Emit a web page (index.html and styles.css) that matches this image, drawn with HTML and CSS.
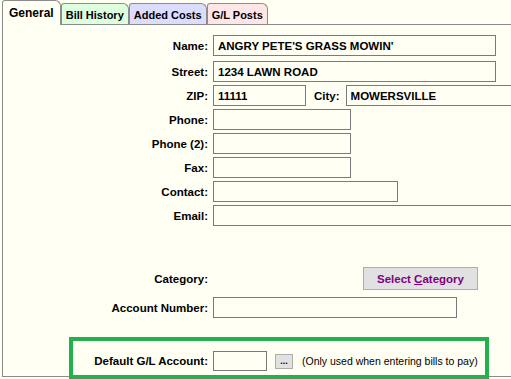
FILE: index.html
```html
<!DOCTYPE html>
<html lang="en">
<head>
    <meta charset="UTF-8">
    <title>Vendor</title>
    <link rel="stylesheet" href="styles.css">
</head>
<body>
<div class="tabs">
    <div class="tab tab-active">General</div>
    <div class="tab tab-bills">Bill History</div>
    <div class="tab tab-costs">Added Costs</div>
    <div class="tab tab-posts">G/L Posts</div>
</div>
<div class="panel">
    <div class="row row-name">
        <label class="lbl">Name:</label>
        <input class="field w-name" type="text" value="ANGRY PETE'S GRASS MOWIN'" readonly>
    </div>
    <div class="row">
        <label class="lbl">Street:</label>
        <input class="field w-name" type="text" value="1234 LAWN ROAD" readonly>
    </div>
    <div class="row">
        <label class="lbl">ZIP:</label>
        <input class="field w-zip" type="text" value="11111" readonly>
        <label class="lbl-city">City:</label>
        <input class="field field-open" type="text" value="MOWERSVILLE" readonly>
    </div>
    <div class="row">
        <label class="lbl">Phone:</label>
        <input class="field w-phone" type="text" readonly>
    </div>
    <div class="row">
        <label class="lbl">Phone (2):</label>
        <input class="field w-phone" type="text" readonly>
    </div>
    <div class="row">
        <label class="lbl">Fax:</label>
        <input class="field w-phone" type="text" readonly>
    </div>
    <div class="row">
        <label class="lbl">Contact:</label>
        <input class="field w-contact" type="text" readonly>
    </div>
    <div class="row">
        <label class="lbl">Email:</label>
        <input class="field field-open" type="text" readonly>
    </div>

    <div class="row row-category">
        <label class="lbl">Category:</label>
        <button class="btn-category">Select <u>C</u>ategory</button>
    </div>
    <div class="row">
        <label class="lbl">Account Number:</label>
        <input class="field w-account" type="text" readonly>
    </div>

    <!-- highlighted box -->
    <div class="gl-box">
        <label class="lbl lbl-gl">Default G/L Account:</label>
        <input class="field w-gl" type="text" readonly>
        <button class="btn-dots">...</button>
        <span class="note">(Only used when entering bills to pay)</span>
    </div>
</div>
</body>
</html>
```

FILE: styles.css
```css
body {
    margin: 0;
    width: 511px;
    height: 379px;
    overflow: hidden;
    background-color: #fffff4;
    font-family: "Liberation Sans", Arial, sans-serif;
    font-size: 11.5px;
    font-weight: bold;
    color: #000;
}

/* tab strip */
.tabs {
    display: flex;
    align-items: flex-end;
    height: 24px;
    padding-left: 2px;
}

.tab {
    box-sizing: border-box;
    height: 21px;
    padding: 1px 4px 0;
    border: 1px solid #8c8c8c;
    border-bottom: none;
    border-radius: 3px 6px 0 0;
    display: flex;
    align-items: center;
    font-size: 11px;
}

.tab-active {
    position: relative;
    z-index: 1;
    height: 25px;
    margin-bottom: -1px;
    padding: 0 6px;
    font-size: 12px;
    background-color: #fffff4;
}

.tab-bills { background-color: #ddffdd; }
.tab-costs { background-color: #dcdcff; }
.tab-posts { background-color: #ffe6e6; }

/* main page, runs on past the right edge of the window */
.panel {
    box-sizing: border-box;
    height: 353px;
    margin-left: 2px;
    padding-top: 10px;
    border: 1px solid #8c8c8c;
    border-right: none;
}

.row {
    display: flex;
    align-items: center;
    height: 21px;
    margin-bottom: 3px;
}

.row-name {
    margin-bottom: 5px;
}

.lbl {
    width: 205px;
    margin-right: 5px;
    text-align: right;
    flex-shrink: 0;
}

.lbl-city {
    margin: 0 6px 0 8px;
}

.field {
    box-sizing: border-box;
    height: 21px;
    padding: 0 4px;
    border: 1px solid #7a7a7a;
    background-color: #fffff4;
    font: inherit;
    color: #000;
    outline: none;
    flex-shrink: 0;
}

/* cut off by the window edge */
.field-open {
    flex: 1;
    min-width: 0;
    border-right: none;
}

.w-name { width: 283px; }
.w-zip { width: 93px; }
.w-phone { width: 138px; }
.w-contact { width: 185px; }
.w-account { width: 244px; }
.w-gl { width: 54px; height: 20px; }

.row-category {
    height: 23px;
    margin-top: 41px;
    margin-bottom: 7px;
}

.btn-category {
    box-sizing: border-box;
    width: 115px;
    height: 23px;
    margin-left: 150px;
    padding: 0;
    border: 1px solid #adadad;
    background-color: #e1e1e1;
    font: inherit;
    color: #800080;
}

/* green highlight around the G/L row */
.gl-box {
    box-sizing: border-box;
    display: flex;
    align-items: center;
    width: 420px;
    margin: 19px 0 0 66px;
    padding: 10px 0 4px;
    border: 4px solid #22b14c;
}

.lbl-gl {
    width: 135px;
}

.btn-dots {
    box-sizing: border-box;
    width: 18px;
    height: 15px;
    margin-left: 8px;
    padding: 0 0 2px;
    border: 1px solid #adadad;
    background-color: #e1e1e1;
    font-family: "Liberation Sans", Arial, sans-serif;
    font-size: 9px;
    font-weight: bold;
    line-height: 9px;
    display: flex;
    align-items: flex-end;
    justify-content: center;
}

.note {
    margin-left: 9px;
    font-size: 10.5px;
    font-weight: normal;
    white-space: nowrap;
}
```
